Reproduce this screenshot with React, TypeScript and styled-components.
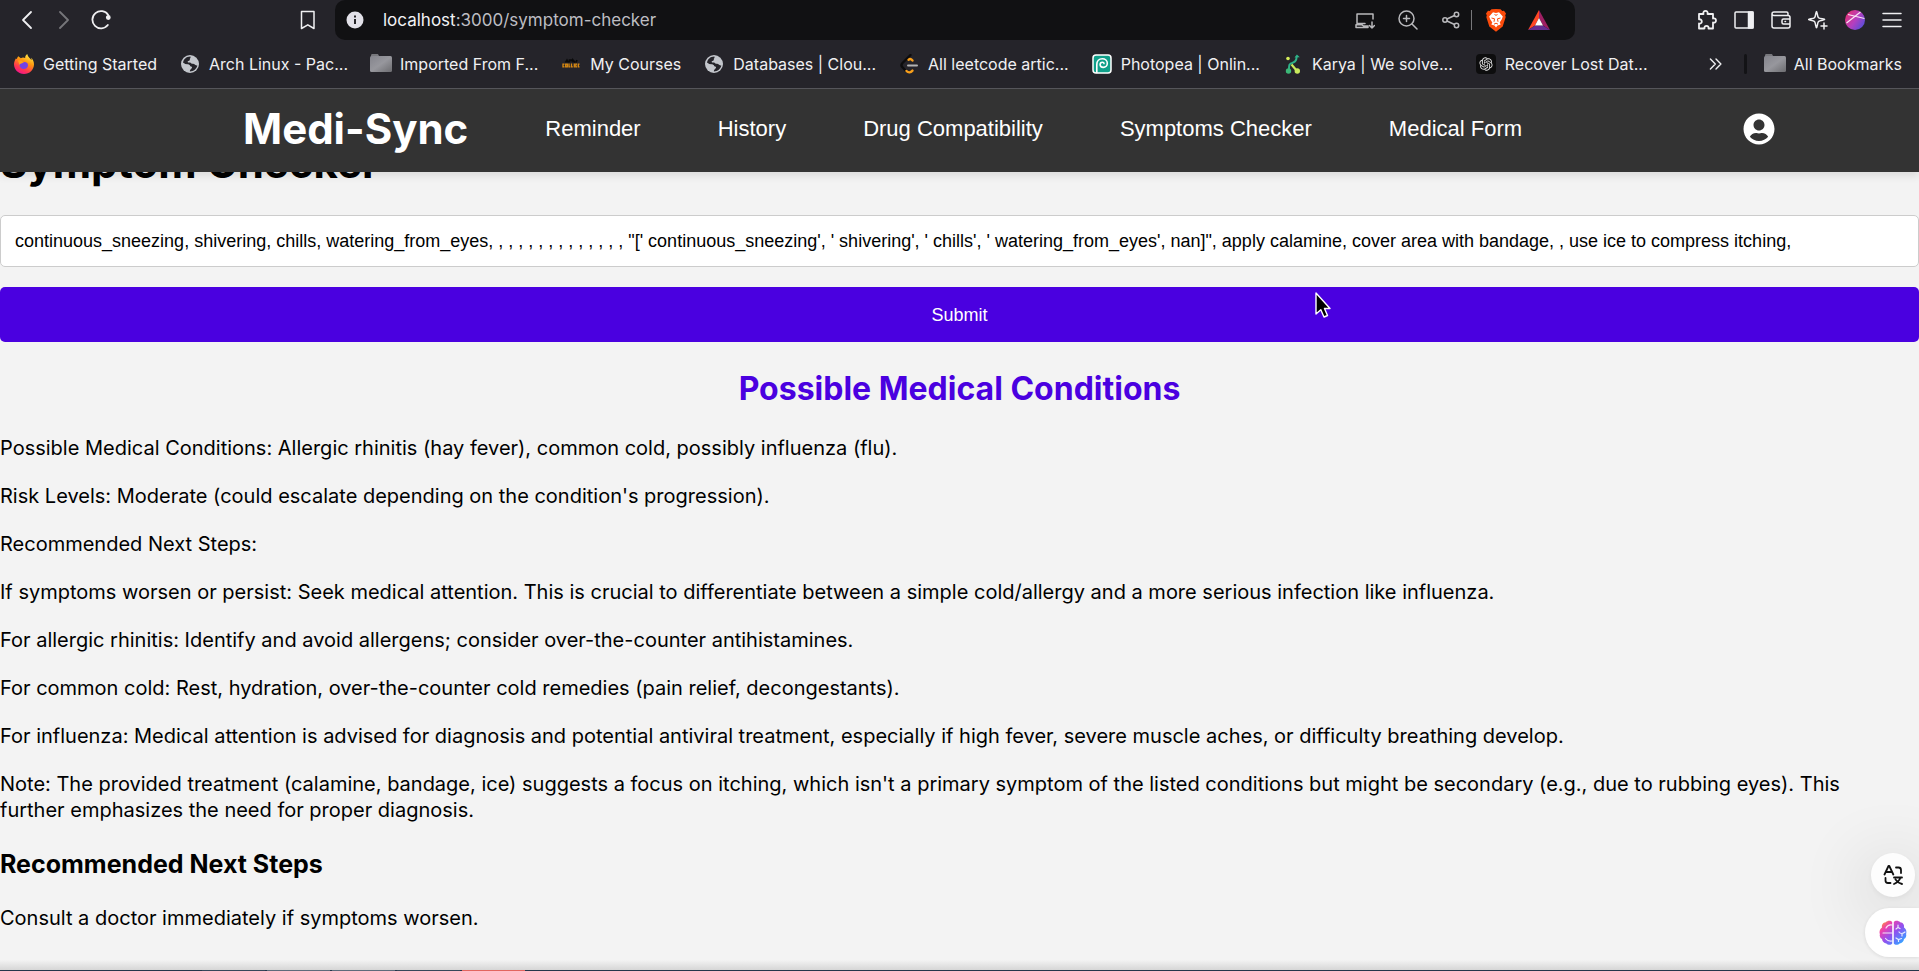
import React, { useState } from "react";
import styled, { createGlobalStyle } from "styled-components";
import { FaUserCircle } from "react-icons/fa";
import { RiOpenaiFill } from "react-icons/ri";

const sans = `Inter, "Noto Sans", sans-serif`;
const arial = `"Liberation Sans", Arial, sans-serif`;

const GlobalStyle = createGlobalStyle`
  *, *::before, *::after { box-sizing: border-box; }
  body { margin: 0; background: #f3f3f3; font-family: ${sans}; color: #000; }
  button { font: inherit; color: inherit; background: none; border: 0; padding: 0; cursor: pointer; }
  a { color: inherit; text-decoration: none; }
  svg { display: block; flex: none; }
`;

const Page = styled.div`
  min-height: 100vh;
  display: flex;
  flex-direction: column;
`;

/* ---------- browser chrome ---------- */

const Chrome = styled.div`
  position: relative;
  z-index: 2;
  background: #25242a;
  color: #f0f0f2;
  font-size: 16px;
  border-bottom: 1px solid #55555a;
`;

const Toolbar = styled.div`
  height: 40px;
  display: flex;
  align-items: stretch;
`;

const ToolGroup = styled.div<{ $width: number }>`
  width: ${(p) => p.$width}px;
  flex: none;
  display: flex;
  align-items: center;
  gap: 17px;
  padding: 0 17px;
`;

const IconButton = styled.button<{ $dim?: boolean; $end?: boolean }>`
  width: 20px;
  height: 20px;
  display: flex;
  align-items: center;
  justify-content: center;
  opacity: ${(p) => (p.$dim ? 0.4 : 1)};
  margin-left: ${(p) => (p.$end ? "auto" : "0")};
`;

const AddressBar = styled.div`
  flex: 1;
  min-width: 0;
  display: flex;
  align-items: center;
  background: #111113;
  border-radius: 10px;
  padding: 0 26px 0 11px;
  gap: 23px;
  color: #b9b9bc;
`;

const Url = styled.div`
  flex: 1;
  margin-left: -4px;
  font-size: 17px;
  color: #bdbdc2;
  span { color: #f2f2f5; }
`;

const Rule = styled.span`
  width: 1px;
  height: 20px;
  background: #77777a;
  margin: 0 -9px 0 -13px;
`;

const Bookmarks = styled.nav`
  height: 48px;
  display: flex;
  align-items: center;
  gap: 23px;
  padding: 0 17px 0 14px;
`;

const Bookmark = styled.a`
  display: flex;
  align-items: center;
  gap: 9px;
  white-space: nowrap;
`;

const BookmarkIcon = styled.span`
  width: 20px;
  display: flex;
  justify-content: center;
`;

const BookmarkEnd = styled.div`
  margin-left: auto;
  display: flex;
  align-items: center;
  gap: 18px;
`;

const Divider = styled.span`
  width: 3px;
  height: 20px;
  border-radius: 2px;
  background: #131316;
`;

/* ---------- application ---------- */

const Header = styled.header`
  position: relative;
  z-index: 1;
  height: 83px;
  flex: none;
  display: flex;
  align-items: center;
  gap: 77px;
  padding: 0 144px 3px 243px;
  background: #333;
  color: #fff;
  box-shadow: 0 4px 8px rgba(0, 0, 0, 0.1);
`;

const Logo = styled.a`
  font-size: 42px;
  font-weight: 700;
  line-height: 52px;
`;

const NavLinks = styled.nav`
  display: flex;
  gap: 77px;
  font-family: ${arial};
  font-size: 22px;
  white-space: nowrap;
`;

const Account = styled.button`
  margin-left: auto;
`;

const Main = styled.main`
  flex: 1;
  margin-top: -35px;
  font-size: 20px;
  line-height: 26px;
`;

const Title = styled.h1`
  margin: 0 0 26px;
  font-size: 42px;
  line-height: 52px;
`;

const Form = styled.form`
  display: flex;
  flex-direction: column;
  gap: 20px;
`;

const SymptomInput = styled.input`
  width: 100%;
  height: 52px;
  padding: 0 14px;
  border: 1px solid #ccc;
  border-radius: 5px;
  background: #fff;
  color: #000;
  font-family: ${arial};
  font-size: 18px;
`;

const Submit = styled.button`
  height: 55px;
  border-radius: 5px;
  background: #4a00e0;
  color: #fff;
  font-family: ${arial};
  font-size: 18px;
`;

const ResultTitle = styled.h2`
  margin: 27px 0 26px;
  text-align: center;
  color: #4a00e0;
  font-size: 32px;
  line-height: 40px;
`;

const Paragraph = styled.p`
  margin: 0 0 22px;
  padding-right: 24px;
`;

const SubTitle = styled.h3`
  margin: 24px 0;
  font-size: 25px;
  line-height: 34px;
`;

const Dock = styled.footer`
  flex: none;
  padding-top: 10px;
  background: linear-gradient(to bottom, #f3f3f3, #d3d3d3);
`;

const DockTabs = styled.div`
  height: 1px;
  display: flex;
  gap: 2px;
  padding-left: 202px;
  background: #24364a;
`;

const DockTab = styled.span<{ $color: string }>`
  width: 63px;
  background: ${(p) => p.$color};
`;

/* ---------- floating helpers ---------- */

const Floating = styled.div`
  position: fixed;
  z-index: 3;
  right: 0;
  bottom: 14px;
  display: flex;
  flex-direction: column;
  align-items: flex-end;
  gap: 11px;
`;

const Translate = styled.button`
  width: 44px;
  height: 44px;
  margin-right: 4px;
  display: grid;
  place-items: center;
  border-radius: 50%;
  background: #fdfdfd;
  box-shadow: 0 2px 6px rgba(0, 0, 0, 0.06), 0 12px 70px 6px rgba(0, 0, 0, 0.16);
`;

const Assistant = styled.button`
  position: relative;
  width: 54px;
  height: 49px;
  padding-left: 14px;
  border-radius: 25px 0 0 25px;
  background: #fff;
  box-shadow: 0 1px 4px rgba(0, 0, 0, 0.1);
`;

const Pointer = styled.svg`
  position: absolute;
  z-index: 4;
  top: 292px;
  left: 1315px;
  pointer-events: none;
`;

/* ---------- drawings ---------- */

type StrokeProps = { children: React.ReactNode; size?: number; w?: number };
const Stroke = ({ children, size = 20, w = 1.5 }: StrokeProps) => (
  <svg width={size} height={size} viewBox="0 0 20 20" fill="none" stroke="currentColor" strokeWidth={w} strokeLinecap="round" strokeLinejoin="round">
    {children}
  </svg>
);

const FirefoxIcon = () => (
  <svg width="20" height="20" viewBox="0 0 20 20">
    <defs>
      <linearGradient id="ff" x1="0.8" y1="0" x2="0.3" y2="1">
        <stop offset="0" stopColor="#fff44f" />
        <stop offset="0.4" stopColor="#ff980e" />
        <stop offset="0.75" stopColor="#ff3750" />
        <stop offset="1" stopColor="#f0128f" />
      </linearGradient>
    </defs>
    <path d="M13.2 0c-1.6 1.2-2.2 2.8-2 4.1-1.3-.7-3-.7-4.3.1L4.2 2.2c-.8.9-1.2 1.9-1.3 2.9L1.8 4.4C.7 6.3 0 8.4 0 10.3 0 15.8 4.5 20 10 20s10-4.3 10-9.8c0-3.3-1.6-5.500-2.900-6.500.4 1 .5 1.800.4 2.500C16 3.900 13.900 3.200 13.200 0Z" fill="url(#ff)" />
    <path d="M6.300 8.200c1-.9 2.500-.7 3.500 0 1.800-.4 4 .5 4.200 2.800.1 2.400-1.900 4-4.200 4-2.500 0-4.300-1.900-4.300-4 0-1 .3-2 .8-2.800Z" fill="#7542e5" />
    <path d="M4 6.500c2.600-.7 4 .4 5.800 1.700-1.500 1.400-3.800 1-4.300 2.800" fill="#ffa21a" />
  </svg>
);

const GlobeIcon = () => (
  <svg width="20" height="20" viewBox="0 0 20 20">
    <circle cx="10" cy="10" r="9" fill="#c3c6cc" />
    <path d="M10.500 2.500C6 2.500 3.500 5.500 3 8.500c1.800 2.300 4.200 2.200 6 2.300 1.200.2.800 1.500 2 1.700 1.300.1 1.300 1.200.5 2-1 .9-1.700 1.500-1.600 3 3.700-.1 6.900-2.800 7.400-6-1.300.4-2-.6-3.300-1.400-1.200-.7-2.500-.3-3.300-1.200-.7-1-2.600.3-3-.9-.3-1.200 1.300-1 2-1.700.6-.7-.5-1.600.8-2.400Z" fill="#25242a" />
    <path d="M3.300 8.800c1.700 1.700 3.500 1.500 5.200 1.700.9.200.9 1.400.1 2.100-.7.700-.1 2-.2 3.800-3.200-.8-5.600-4.200-5.100-7.600Z" fill="#c3c6cc" />
    <path d="M12.500 3.200c.3 2 1.800 3.400 4 3.300" fill="none" stroke="#c3c6cc" strokeWidth="1.200" />
  </svg>
);

const FolderIcon = () => (
  <svg width="22" height="20" viewBox="0 0 22 20">
    <defs>
      <linearGradient id="fold" x1="0" y1="0" x2="1" y2="1">
        <stop offset="0" stopColor="#84848c" />
        <stop offset="0.5" stopColor="#97979d" />
        <stop offset="1" stopColor="#6c6c70" />
      </linearGradient>
    </defs>
    <path d="M1 3V1.500C1 .7 1.500 0 2.300 0h5c.8 0 1.200.6 1.500 1.500L9 3Z" fill="#77777c" />
    <rect x="0" y="2" width="22" height="16" rx="1.500" fill="url(#fold)" />
  </svg>
);

const ApnaIcon = () => (
  <svg width="18" height="20" viewBox="0 0 18 20">
    <path d="M3.500 8.500 5 6l1.500 2.500M7.500 8.500V6H9.500v1.500M11 8.500V6l2 2.500M14 8.500 15 6" stroke="#0a0a0b" strokeWidth="1.600" fill="none" />
    <g fill="none" stroke="#d98a12" strokeWidth="1.300">
      <path d="M2.500 10.200H1v2.600h1.500M3.700 10.200h1.600v2.600H3.700ZM7 9.600v3.200h1.300M9.500 9.600v3.200h1.300M12.300 9.600v3.800M15 10.200h-1.200v2.600H15M17.500 10.200h-1.200v2.600h1.200" />
    </g>
  </svg>
);

const LeetIcon = () => (
  <svg width="18" height="20" viewBox="0 0 18 20" fill="none" strokeWidth="2.400" strokeLinecap="round">
    <path d="M10.500 1 2.500 9c-1.300 1.300-1.300 3 0 4.300L5.500 16.500" stroke="#0c0c0d" />
    <path d="M8.500 5.800c1.400-1.200 2.700-.8 4 .7M6.500 17c2 2.200 4.200 1.600 6-.4" stroke="#f89f1b" />
    <path d="M8 11.500h9" stroke="#b3b3b3" strokeWidth="2" />
  </svg>
);

const PhotopeaIcon = () => (
  <svg width="20" height="20" viewBox="0 0 20 20">
    <rect x="1" y="1" width="18" height="18" rx="3" fill="#10a08a" stroke="#fff" strokeWidth="1.500" />
    <path d="M4.800 18.500V10.500c0-3.300 2.300-5.700 5.500-5.700 2.900 0 5 1.900 5 4.500 0 2.300-1.800 4.100-4 4.100-1.900 0-3.200-1.200-3.200-2.800 0-1.400 1-2.400 2.300-2.400 1 0 1.600.6 1.600 1.400" fill="none" stroke="#fff" strokeWidth="1.600" strokeLinecap="round" />
  </svg>
);

const KaryaIcon = () => (
  <svg width="16" height="20" viewBox="0 0 16 20" fill="none">
    <path d="M3.500 17c1.500-3-.8-6 2-7.300 3-1.400 6-1.500 6.200-7.200" stroke="#2fb28a" strokeWidth="2" />
    <path d="m9.500 3.500 2.400-3 2.900 2.700Z" fill="#2fb28a" />
    <path d="M6.500 10.500 12 17" stroke="#c9ea5c" strokeWidth="2.200" />
    <circle cx="3.500" cy="17" r="2.700" fill="#3cb878" />
    <circle cx="12.300" cy="17" r="2.700" fill="#c9ea5c" />
    <circle cx="3" cy="4.500" r="1.800" fill="#d6ee5a" />
  </svg>
);

const OpenAiIcon = () => (
  <svg width="20" height="20" viewBox="0 0 20 20">
    <rect width="20" height="20" rx="4" fill="#0d0d0e" />
    <RiOpenaiFill x="2" y="2" size={16} color="#e4e4e4" />
  </svg>
);

const BatIcon = () => (
  <svg width="22" height="20" viewBox="0 0 22 20">
    <path d="M11 0 0 20l7-4.500L11 8Z" fill="#ff4724" />
    <path d="m11 0 11 20-7-4.500L11 8Z" fill="#9e1f63" />
    <path d="M0 20h22l-7-4.500H7Z" fill="#662d91" />
    <path d="m11 8-4 7.500h8Z" fill="#fff" />
  </svg>
);

const ProfileIcon = () => (
  <svg width="20" height="20" viewBox="0 0 20 20">
    <defs>
      <linearGradient id="prof" x1="0" y1="0.3" x2="1" y2="1">
        <stop offset="0" stopColor="#e0337a" />
        <stop offset="0.45" stopColor="#b43fc0" />
        <stop offset="1" stopColor="#3b53e0" />
      </linearGradient>
    </defs>
    <circle cx="10" cy="10" r="10" fill="url(#prof)" />
    <path d="M1.500 13 15.500 2M3 4.500l16.500 4" stroke="#fbe4f5" strokeWidth="1.200" />
  </svg>
);

const BrainIcon = () => (
  <svg width="28" height="26" viewBox="0 0 28 26">
    <defs>
      <linearGradient id="brain" x1="0.05" y1="0" x2="0.95" y2="0.9">
        <stop offset="0" stopColor="#ffa51f" />
        <stop offset="0.25" stopColor="#ee3fae" />
        <stop offset="0.55" stopColor="#9350ee" />
        <stop offset="0.85" stopColor="#4d8cff" />
        <stop offset="1" stopColor="#2bb3ff" />
      </linearGradient>
    </defs>
    <path fill="url(#brain)" d="M13.200 2C12 .3 8.500.2 6.800 2.300 4 2.500 2.500 5 3 7.500.500 9 .200 12.500.900 14c-.6 2 .3 4.300 2.100 5 .3 2.500 2 4.300 4.400 4.400 1.800 2 4.800 1.800 5.800 0ZM14.800 2C16 .3 19.500.2 21.200 2.300 24 2.500 25.500 5 25 7.500c2.500 1.500 2.800 5 2.100 6.500.6 2-.3 4.300-2.100 5-.3 2.500-2 4.300-4.400 4.400-1.800 2-4.800 1.800-5.800 0Z" />
    <g stroke="#fff" strokeWidth="1.200" strokeOpacity=".85" fill="none" strokeLinecap="round">
      <path d="M13 13H4M13 5c-2-.5-4.500 0-6 3M13 21c-3 .5-5-.5-6.500-2.500M19 5v2.500l-2 1.500M19 7.500l2 1M20 12c1.500 2 3.500 2 6 0M23 13.500V16M17 18l2.500 1.500 3-1M19.500 19.500V21.500" />
    </g>
  </svg>
);

/* ---------- content ---------- */

const bookmarks: { label: string; icon: React.ReactNode }[] = [
  { label: "Getting Started", icon: <FirefoxIcon /> },
  { label: "Arch Linux - Pac...", icon: <GlobeIcon /> },
  { label: "Imported From F...", icon: <FolderIcon /> },
  { label: "My Courses", icon: <ApnaIcon /> },
  { label: "Databases | Clou...", icon: <GlobeIcon /> },
  { label: "All leetcode artic...", icon: <LeetIcon /> },
  { label: "Photopea | Onlin...", icon: <PhotopeaIcon /> },
  { label: "Karya | We solve...", icon: <KaryaIcon /> },
  { label: "Recover Lost Dat...", icon: <OpenAiIcon /> },
];

const links = ["Reminder", "History", "Drug Compatibility", "Symptoms Checker", "Medical Form"];

const results = [
  "Possible Medical Conditions: Allergic rhinitis (hay fever), common cold, possibly influenza (flu).",
  "Risk Levels: Moderate (could escalate depending on the condition's progression).",
  "Recommended Next Steps:",
  "If symptoms worsen or persist: Seek medical attention. This is crucial to differentiate between a simple cold/allergy and a more serious infection like influenza.",
  "For allergic rhinitis: Identify and avoid allergens; consider over-the-counter antihistamines.",
  "For common cold: Rest, hydration, over-the-counter cold remedies (pain relief, decongestants).",
  "For influenza: Medical attention is advised for diagnosis and potential antiviral treatment, especially if high fever, severe muscle aches, or difficulty breathing develop.",
  "Note: The provided treatment (calamine, bandage, ice) suggests a focus on itching, which isn't a primary symptom of the listed conditions but might be secondary (e.g., due to rubbing eyes). This further emphasizes the need for proper diagnosis.",
];

const initialSymptoms =
  "continuous_sneezing, shivering, chills, watering_from_eyes, , , , , , , , , , , , , , \"[' continuous_sneezing', ' shivering', ' chills', ' watering_from_eyes', nan]\", apply calamine, cover area with bandage, , use ice to compress itching,";

const dockTabs = ["#36475a", "#5d6b7b", "#5d6b7b", "#36475a", "#e2655f"];

export default function App() {
  const [symptoms, setSymptoms] = useState(initialSymptoms);

  return (
    <Page>
      <GlobalStyle />
      <Chrome>
        <Toolbar>
          <ToolGroup $width={335}>
            <IconButton aria-label="Back"><Stroke w={1.8}><path d="M14 2 6 10l8 8" /></Stroke></IconButton>
            <IconButton aria-label="Forward" $dim><Stroke w={1.8}><path d="m6 2 8 8-8 8" /></Stroke></IconButton>
            <IconButton aria-label="Reload">
              <Stroke w={1.8}><path d="M16.800 15A8.600 8.600 0 1 1 17.200 5" /><circle cx="17.300" cy="7.500" r="1.500" fill="currentColor" /></Stroke>
            </IconButton>
            <IconButton aria-label="Bookmark this page" $end><Stroke><path d="M3.500 1.500h12.500v17l-6.200-3.700-6.300 3.700Z" /></Stroke></IconButton>
          </ToolGroup>
          <AddressBar>
            <svg width="18" height="18" viewBox="0 0 18 18">
              <circle cx="9" cy="9" r="8.500" fill="#e2e1e8" />
              <path d="M9 8v5M9 4.600v1.800" stroke="#111113" strokeWidth="1.800" />
            </svg>
            <Url><span>localhost</span>:3000/symptom-checker</Url>
            <IconButton aria-label="Install app">
              <Stroke><path d="M10 13.500H2V4h16v5M1 17.500h12v-1.500H8.500L7 14.800H1ZM17 12v6m-2.500-2.500L17 18l2.500-2.500" /></Stroke>
            </IconButton>
            <IconButton aria-label="Zoom"><Stroke><circle cx="8.500" cy="8.500" r="7.500" /><path d="m14 14 5 5M8.500 5.500v6M5.500 8.500h6" /></Stroke></IconButton>
            <IconButton aria-label="Share">
              <Stroke><circle cx="4" cy="10" r="2.200" /><circle cx="15.500" cy="4.500" r="2.200" /><circle cx="15.500" cy="15.500" r="2.200" /><path d="m6 9 7.500-3.500M6 11l7.500 3.500" /></Stroke>
            </IconButton>
            <Rule />
            <IconButton aria-label="Shields">
              <svg width="20" height="23" viewBox="0 0 20 23">
                <path d="m10 0 4.500.2L16.300 2l1.700-.2L20 4.500l-.8 2 .5 1.500-3 9.500L10 22.800 3.300 17.500.3 8l.5-1.500L0 4.500 2 1.800 3.700 2 5.500.2Z" fill="#fb4b0b" />
                <path d="M10 4 7 3.300 3.200 7.500l1 2.800 2.100 3.200-1 2 3.200 1L10 18.500l1.500-2 3.200-1-1-2 2.100-3.200 1-2.800L13 3.300Z" fill="#fff" />
                <path d="m5.500 9 3 .8-.5 3M14.500 9l-3 .8.5 3M8 15.200l2-1 2 1M8.500 5.500l1.500.8 1.500-.8" stroke="#fb4b0b" fill="none" />
              </svg>
            </IconButton>
            <IconButton aria-label="Rewards"><BatIcon /></IconButton>
          </AddressBar>
          <ToolGroup $width={344}>
            <IconButton aria-label="Extensions" $end>
              <Stroke w={1.8}><path d="M2 4h4.500C5.800 2 7 .9 8.500.9S11.200 2 10.500 4H16v4.500c2-.6 3 .5 3 2s-1.200 2.600-3 2V18.500h-4.500c.4-1.600-.5-2.600-2-2.600s-2.400 1-2 2.600H2v-5c1.600.4 2.800-.6 2.800-2.100S3.600 9 2 9.300Z" /></Stroke>
            </IconButton>
            <IconButton aria-label="Side panel"><Stroke><rect x="1" y="2" width="18" height="16" rx="1" /><path d="M14.500 2H19v16h-4.500Z" fill="currentColor" /></Stroke></IconButton>
            <IconButton aria-label="Wallet">
              <Stroke><path d="M17 5.500V3.500c0-1-.5-1.500-1.500-1.500H3C1.500 2 1 3 1 4v12c0 1.200.8 2 2 2h14c1.200 0 2-.8 2-2V7.500c0-1.200-.8-2-2-2H3C1.800 5.500 1 5 1 4M19 9h-6.500c-1 0-1.500.6-1.500 1.500v2c0 1 .6 1.500 1.500 1.500H19M14 11.500h.500" /></Stroke>
            </IconButton>
            <IconButton aria-label="Assistant">
              <Stroke><path d="M8.500 1.500c.8 0 .7 5 2 6.200s6.200 1 6.200 1.800-5 .7-6.200 2-1.200 6.200-2 6.200-.8-5-2-6.200S.5 10.300.5 9.500s4.700-.6 6-1.800 1.200-6.200 2-6.200ZM16 13v6M13 16h6" /></Stroke>
            </IconButton>
            <IconButton aria-label="Profile"><ProfileIcon /></IconButton>
            <IconButton aria-label="Menu"><Stroke><path d="M1 3.500h18M1 10h18M1 16.500h18" /></Stroke></IconButton>
          </ToolGroup>
        </Toolbar>
        <Bookmarks aria-label="Bookmarks">
          {bookmarks.map((b) => (
            <Bookmark href="#" key={b.label}><BookmarkIcon>{b.icon}</BookmarkIcon>{b.label}</Bookmark>
          ))}
          <BookmarkEnd>
            <IconButton aria-label="More bookmarks"><Stroke w={2} size={14}><path d="m2 3 7 7-7 7M10 3l7 7-7 7" /></Stroke></IconButton>
            <Divider />
            <Bookmark href="#"><BookmarkIcon><FolderIcon /></BookmarkIcon>All Bookmarks</Bookmark>
          </BookmarkEnd>
        </Bookmarks>
      </Chrome>

      <Header>
        <Logo href="#">Medi-Sync</Logo>
        <NavLinks>
          {links.map((l) => (
            <a href="#" key={l}>{l}</a>
          ))}
        </NavLinks>
        <Account aria-label="Account"><FaUserCircle size={32} /></Account>
      </Header>

      <Main>
        <Title>Symptom Checker</Title>
        <Form onSubmit={(e) => e.preventDefault()}>
          <SymptomInput aria-label="Symptoms" value={symptoms} onChange={(e) => setSymptoms(e.target.value)} />
          <Submit type="submit">Submit</Submit>
        </Form>
        <ResultTitle>Possible Medical Conditions</ResultTitle>
        {results.map((r) => (
          <Paragraph key={r}>{r}</Paragraph>
        ))}
        <SubTitle>Recommended Next Steps</SubTitle>
        <Paragraph>Consult a doctor immediately if symptoms worsen.</Paragraph>
      </Main>

      <Dock>
        <DockTabs>
          {dockTabs.map((c, i) => (
            <DockTab key={i} $color={c} />
          ))}
        </DockTabs>
      </Dock>

      <Floating>
        <Translate aria-label="Translate">
          <svg width="20" height="20" viewBox="0 0 20 20" fill="none" stroke="#111" strokeWidth="1.800" strokeLinecap="round" strokeLinejoin="round">
            <path d="m1.500 9.500 4-8.500h.8l4 8.500M3 7h5.800M13 2.500h2.500c1.600 0 2.500.9 2.500 2.500v3M2.500 13v2.500c0 1.600.9 2.500 2.500 2.500h2.500M11 12.500h8M17.500 12.500c-1 3-3 5-6.500 6.500M12.500 14.500c1.500 2.200 3.500 3.800 6.500 4.500" />
          </svg>
        </Translate>
        <Assistant aria-label="AI assistant"><BrainIcon /></Assistant>
      </Floating>

      <Pointer width="16" height="26" viewBox="0 0 16 26">
        <path d="M1 1v21l4.800-4.300L9 25l3.500-1.500-3-7H15Z" fill="#000" stroke="#fff" strokeWidth="1.400" strokeLinejoin="round" />
      </Pointer>
    </Page>
  );
}
